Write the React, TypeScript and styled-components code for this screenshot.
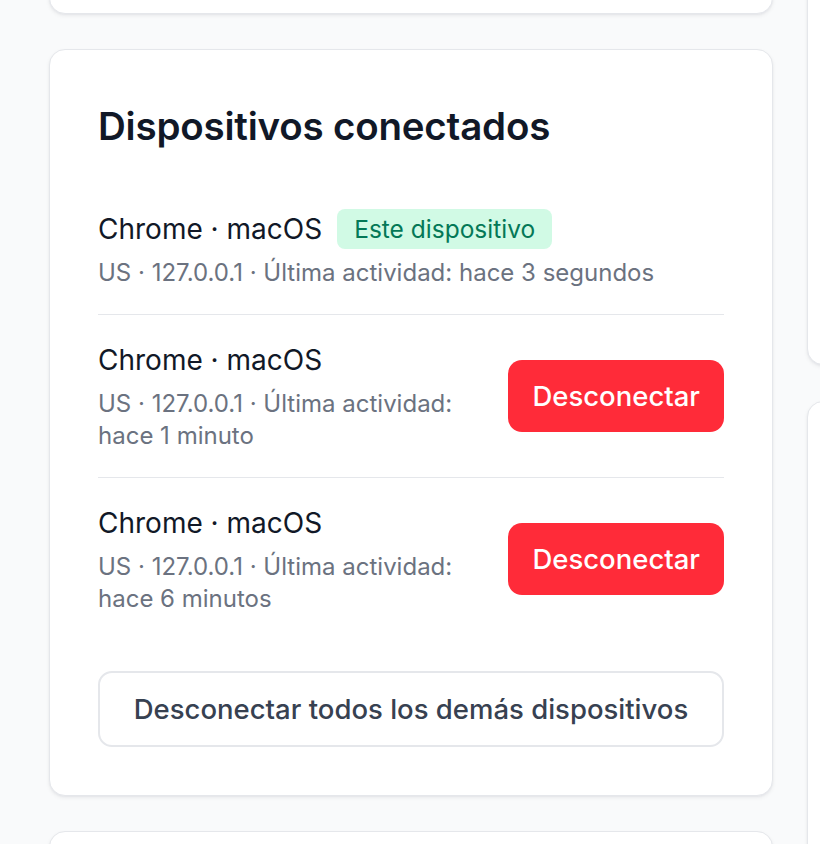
import React from "react";
import styled, { createGlobalStyle } from "styled-components";

const GlobalStyle = createGlobalStyle`
  html, body {
    margin: 0;
    padding: 0;
    background: #f9fafb;
    font-family: Inter, "Noto Sans", "Liberation Sans", sans-serif;
    -webkit-font-smoothing: antialiased;
  }
  body {
    width: 820px;
    height: 844px;
    overflow: hidden;
  }
`;

type Device = {
  name: string;
  meta: string;
  current?: boolean;
};

const devices: Device[] = [
  {
    name: "Chrome · macOS",
    meta: "US · 127.0.0.1 · Última actividad: hace 3 segundos",
    current: true,
  },
  {
    name: "Chrome · macOS",
    meta: "US · 127.0.0.1 · Última actividad: hace 1 minuto",
  },
  {
    name: "Chrome · macOS",
    meta: "US · 127.0.0.1 · Última actividad: hace 6 minutos",
  },
];

const Page = () => {
  return (
    <>
      <GlobalStyle />
      <Layout>
        <Column>
          <Card $height={60} />
          <Card>
            <Heading>Dispositivos conectados</Heading>
            <List>
              {devices.map((d, i) => (
                <Row key={i}>
                  <Info>
                    <TitleLine>
                      <Title>{d.name}</Title>
                      {d.current && <Badge>Este dispositivo</Badge>}
                    </TitleLine>
                    <Meta>{d.meta}</Meta>
                  </Info>
                  {!d.current && <DangerButton>Desconectar</DangerButton>}
                </Row>
              ))}
            </List>
            <OutlineButton>Desconectar todos los demás dispositivos</OutlineButton>
          </Card>
          <Card $height={200} />
        </Column>
        <SideColumn>
          <Card $height={400} />
          <Card $height={600} />
        </SideColumn>
      </Layout>
    </>
  );
};

export default Page;

const Layout = styled.div`
  display: flex;
  gap: 34px;
  padding: 0 0 0 49px;
  margin-top: -46px;
`;

const Column = styled.div`
  width: 724px;
  flex-shrink: 0;
  display: flex;
  flex-direction: column;
  gap: 35px;
`;

const SideColumn = styled.div`
  width: 400px;
  flex-shrink: 0;
  display: flex;
  flex-direction: column;
  gap: 36px;
  margin-top: 11px;
`;

const Card = styled.section<{ $height?: number }>`
  box-sizing: border-box;
  background: #ffffff;
  border: 1px solid #e5e7eb;
  border-radius: 16px;
  box-shadow: 0 2px 4px rgba(17, 24, 39, 0.06), 0 1px 2px rgba(17, 24, 39, 0.04);
  padding: 48px;
  ${({ $height }) => ($height ? `height: ${$height}px; padding: 0;` : "")}
  flex-shrink: 0;
`;

const Heading = styled.h2`
  margin: 0 0 31px;
  font-size: 38.5px;
  line-height: 56px;
  font-weight: 600;
  color: #111827;
  letter-spacing: -0.2px;
`;

const List = styled.div`
  display: flex;
  flex-direction: column;
`;

const Row = styled.div`
  display: flex;
  align-items: center;
  justify-content: space-between;
  gap: 36px;
  padding: 25px 0 25px;
  border-bottom: 1px solid #e5e7eb;

  &:first-child {
    padding-top: 24px;
  }
  &:last-child {
    border-bottom: none;
  }
`;

const Info = styled.div`
  display: flex;
  flex-direction: column;
  gap: 8px;
  min-width: 0;
`;

const TitleLine = styled.div`
  display: flex;
  align-items: center;
  gap: 15px;
  height: 40px;
`;

const Title = styled.span`
  font-size: 28px;
  line-height: 40px;
  font-weight: 400;
  color: #111827;
`;

const Badge = styled.span`
  display: inline-flex;
  align-items: center;
  height: 40px;
  padding: 0 17px;
  border-radius: 8px;
  background: #d1fae5;
  color: #047857;
  font-size: 24.5px;
  font-weight: 400;
`;

const Meta = styled.span`
  font-size: 24px;
  line-height: 32px;
  color: #6b7280;
`;

const DangerButton = styled.button`
  flex-shrink: 0;
  height: 72px;
  padding: 0 24px;
  border: none;
  border-radius: 14px;
  background: #ff2b39;
  color: #ffffff;
  font-family: inherit;
  font-size: 27.5px;
  font-weight: 500;
  cursor: pointer;
`;

const OutlineButton = styled.button`
  display: block;
  width: 100%;
  height: 76px;
  margin-top: 31px;
  border: 2px solid #e5e7eb;
  border-radius: 14px;
  background: #ffffff;
  color: #374151;
  font-family: inherit;
  font-size: 27.5px;
  font-weight: 500;
  cursor: pointer;
`;
